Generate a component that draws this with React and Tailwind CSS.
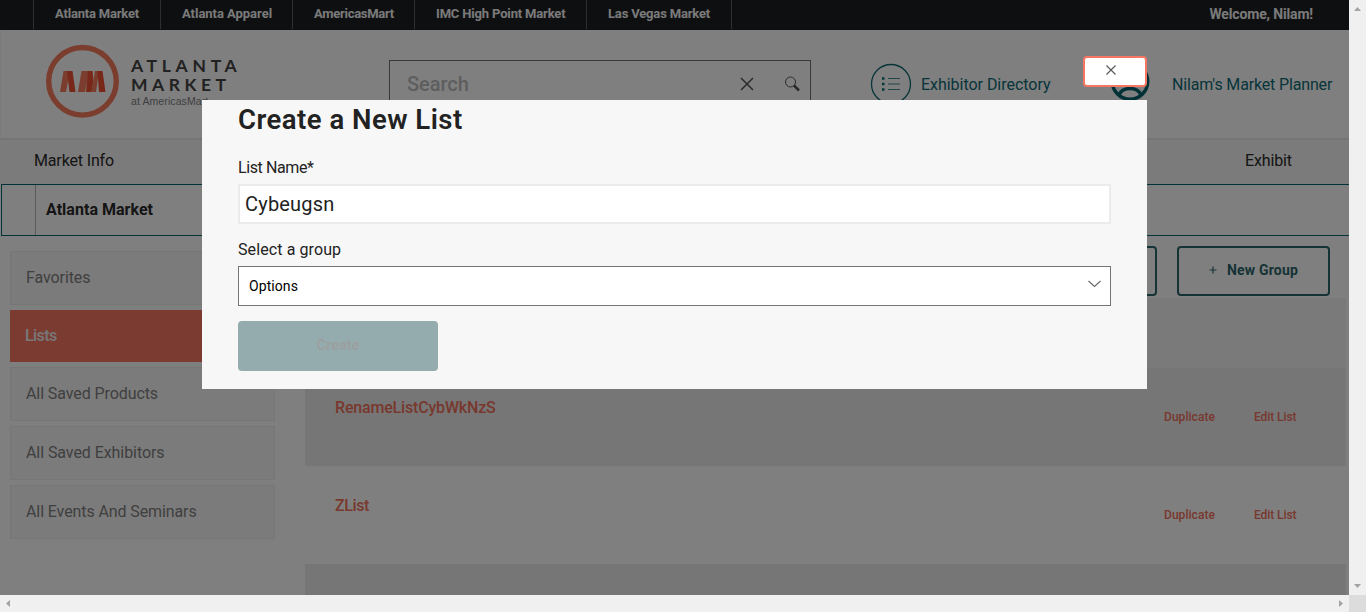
const markets = [
  { name: "Atlanta Market", cls: "w-[127px] tracking-[-0.19px]" },
  { name: "Atlanta Apparel", cls: "w-[132px] tracking-[-0.03px]" },
  { name: "AmericasMart", cls: "w-[122px] tracking-[-0.27px]" },
  { name: "IMC High Point Market", cls: "w-[172px] tracking-[-0.16px]" },
  { name: "Las Vegas Market", cls: "w-[145px] tracking-[-0.17px]" },
];

const sections = [
  { name: "Favorites", cls: "tracking-[-0.09px]" },
  { name: "Lists", active: true, cls: "tracking-[-0.6px]" },
  { name: "All Saved Products", cls: "tracking-[-0.09px]" },
  { name: "All Saved Exhibitors", cls: "tracking-[-0.07px]" },
  { name: "All Events And Seminars", cls: "tracking-[-0.1px]" },
];

function TopBar() {
  return (
    <div className="flex h-[30px] shrink-0 bg-[#1b1e22] pl-[33px] text-[13px] font-bold text-[#f4f4f4]">
      {markets.map((m) => (
        <div key={m.name} className={`h-[29px] border-l border-[#5c5f62] pl-[21px] leading-[27px] whitespace-nowrap ${m.cls}`}>
          {m.name}
        </div>
      ))}
      <div className="h-[29px] border-l border-[#5c5f62]" />
      <div className="ml-auto pr-[36px] text-sm leading-[28px] tracking-[-0.15px]">Welcome, Nilam!</div>
    </div>
  );
}

function Logo() {
  return (
    <div className="flex w-[343px] shrink-0 pt-[14px]">
      <svg width="74" height="74" viewBox="0 0 74 74" className="shrink-0">
        <circle cx="36.500" cy="37.300" r="33.800" fill="none" stroke="#f67a5c" strokeWidth="5.400" />
        <path d="M17.500 27H24l-4 21H14z" fill="#f67a5c" />
        <path d="M21 27h5.500l3 21h-6z" fill="#ee5130" />
        <path d="M35.500 27H43l-4 21h-7z" fill="#f67a5c" />
        <path d="M42 27h4.500l1 10-2 11h-5.500z" fill="#ee5130" />
        <path d="M49 27h4l-3 21h-4.500z" fill="#f67a5c" />
        <path d="M51.500 27h5l3 21H53z" fill="#ee5130" />
      </svg>
      <div className="pt-[12px] pl-[11px] font-['Lato',sans-serif] text-[17.5px] font-bold leading-[19px] whitespace-nowrap text-[#444]">
        <div className="tracking-[4.7px]">ATLANTA</div>
        <div className="tracking-[4.5px]">MARKET</div>
        <div className="-mt-px font-['Liberation_Sans',sans-serif] text-[10.5px] font-normal leading-[16px] tracking-[0.1px] text-[#808080]">at AmericasMart</div>
      </div>
    </div>
  );
}

function Header() {
  return (
    <header className="flex h-[108px] shrink-0 border-l border-[#f4f4f4] pl-[45px] text-base text-[#0e6a74]">
      <Logo />
      <div className="mt-[30px] flex h-[48px] w-[422px] shrink-0 items-center border border-[#707070] pl-[17px]">
        <span className="w-[333px] text-[20px] font-medium tracking-[-0.05px] text-[#bcbcbc]">Search</span>
        <svg width="14" height="14" viewBox="0 0 14 14" stroke="#555" strokeWidth="1.500">
          <path d="M1 1l12 12M13 1L1 13" />
        </svg>
        <svg width="16" height="16" viewBox="0 0 16 16" className="ml-[30px]" fill="none" stroke="#555">
          <circle cx="6.500" cy="6" r="5" />
          <path d="M10 9.500l5 5" strokeWidth="2.500" />
        </svg>
      </div>
      <svg width="42" height="42" viewBox="0 0 42 42" className="mt-[33px] ml-[59px] shrink-0" fill="none" stroke="#0e6a74">
        <circle cx="21" cy="21" r="19.500" strokeWidth="1.300" />
        <path d="M18 15.500h12M18 21h12M18 26.500h12" strokeWidth="0.800" />
        <path d="M12 15.500h2.500M12 21h2.500M12 26.500h2.500" strokeWidth="2.400" />
      </svg>
      <div className="ml-[9px] w-[189px] leading-[109px] tracking-[-0.03px] whitespace-nowrap">Exhibitor Directory</div>
      <svg width="40" height="40" viewBox="0 0 40 40" className="mt-[32px] shrink-0" fill="none" stroke="#00626c" strokeWidth="3.500">
        <circle cx="20" cy="19.500" r="17.700" />
        <circle cx="20" cy="14" r="6" />
        <path d="M9 33c2-5 6-6.500 11-6.500S29 28 31 33" />
      </svg>
      <div className="ml-[22px] leading-[109px] tracking-[-0.15px] whitespace-nowrap">Nilam's Market Planner</div>
    </header>
  );
}

function ListRow({ name, nameClass, shaded }) {
  return (
    <div className={`flex h-[98px] shrink-0 pl-[30px] text-[#f0705c] ${shaded ? "bg-[#ececec]" : ""}`}>
      <div className={`w-[829px] font-medium leading-[80px] ${nameClass}`}>{name}</div>
      <div className="w-[90px] text-[12px] font-medium leading-[98px] tracking-[0.05px]">Duplicate</div>
      <div className="text-[12px] font-medium leading-[98px] tracking-[-0.08px]">Edit List</div>
    </div>
  );
}

function Planner() {
  return (
    <main className="flex min-h-0 flex-1 overflow-hidden">
      <nav className="flex w-[275px] shrink-0 flex-col gap-[5px] pt-[15px] pl-[10px] text-base whitespace-nowrap">
        {sections.map((s) =>
          s.active ? (
            <div key={s.name} className={`h-[52px] bg-[#f67662] pl-[15px] font-medium leading-[52px] text-[#f0f0f0] ${s.cls}`}>{s.name}</div>
          ) : (
            <div key={s.name} className={`h-[54px] border border-[#ececec] bg-[#f6f6f6] pl-[15px] leading-[52px] text-[#808080] ${s.cls}`}>{s.name}</div>
          )
        )}
      </nav>
      <div className="ml-[30px] flex w-[1041px] shrink-0 flex-col">
        <div className="flex h-[62px] shrink-0 justify-end gap-[20px] pt-[10px] pr-[16px] text-sm font-bold text-[#2b666a]">
          <div className="h-[50px] w-[153px] rounded border-2 border-[#2b666a]" />
          <div className="flex h-[50px] w-[153px] items-center rounded border-2 border-[#2b666a] pb-[2px] pl-[30px] tracking-[0.2px] whitespace-nowrap">
            <svg width="8" height="8" viewBox="0 0 8 8" className="mr-[10px]" stroke="#2b666a" strokeWidth="1.200">
              <path d="M0.500 4h7M4 0.500v7" />
            </svg>
            New Group
          </div>
        </div>
        <div className="h-[70px] shrink-0 bg-[#f4f4f4]" />
        <ListRow name="RenameListCybWkNzS" nameClass="tracking-[-0.18px]" shaded />
        <ListRow name="ZList" nameClass="tracking-[-0.39px]" />
        <div className="h-[98px] shrink-0 bg-[#ececec]" />
      </div>
    </main>
  );
}

function Dialog() {
  return (
    <>
      <section className="absolute top-[100px] left-[202px] flex h-[289px] w-[945px] flex-col bg-[#f7f7f7] px-[36px] text-base text-[#222]">
        <h2 className="mt-[4px] h-[32px] text-[27.5px] font-semibold leading-[32px] tracking-[0.48px]">Create a New List</h2>
        <label className="mt-[20px] h-[24px] leading-[24px] tracking-[-0.4px]">List Name*</label>
        <div className="mt-[4px] h-[40px] border-2 border-[#ebebeb] bg-white pl-[5px] text-[20px] leading-[37px] tracking-[0.2px]">Cybeugsn</div>
        <label className="mt-[14px] h-[24px] leading-[24px] tracking-[0.1px]">Select a group</label>
        <div className="mt-[4px] flex h-[40px] items-center justify-between border border-[#757575] bg-white pr-[9px] pl-[10px] text-sm tracking-[0.08px] text-black">
          Options
          <svg width="13" height="8" viewBox="0 0 13 8" className="-mt-[4px]" fill="none" stroke="#666" strokeWidth="1.100">
            <path d="M0.500 1l6 5.500 6-5.500" />
          </svg>
        </div>
        <button className="mt-[15px] h-[50px] w-[200px] rounded bg-[#94acad] pb-[2px] text-sm font-bold tracking-[0.25px] text-[#9c9fa0]">Create</button>
      </section>
      <button className="absolute top-[56px] left-[1083px] flex h-[31px] w-[64px] items-center rounded border-2 border-[#f67662] bg-white pl-[21px]">
        <svg width="10" height="10" viewBox="0 0 10 10" className="-mt-[3px]" stroke="#555" strokeWidth="1.100">
          <path d="M0.500 0.500l9 9M9.500 0.500l-9 9" />
        </svg>
      </button>
    </>
  );
}

export default function App() {
  return (
    <div className="grid h-[612px] w-[1366px] grid-cols-[1349px_17px] grid-rows-[595px_17px] overflow-hidden font-['Roboto',sans-serif]">
      <div className="relative flex h-[595px] flex-col overflow-hidden bg-white">
        <TopBar />
        <Header />
        <div className="flex h-[46px] shrink-0 justify-between border-t-2 border-[#ebebeb] bg-[#f6f6f6] pr-[57px] pl-[34px] text-base leading-[42px] text-[#2a2a2a]">
          <span className="tracking-[-0.15px]">Market Info</span>
          <span className="tracking-[-0.12px]">Exhibit</span>
        </div>
        <div className="ml-px flex h-[52px] shrink-0 border-y border-l border-[#006474]">
          <div className="w-[34px] border-r border-[#b4b4b4]" />
          <div className="pl-[10px] text-base font-bold leading-[50px] tracking-[0.03px] text-[#2a2a2a]">Atlanta Market</div>
        </div>
        <Planner />
        <div className="absolute inset-0 bg-black/50" />
        <Dialog />
      </div>
      <div className="flex flex-col items-center justify-between bg-[#f0f0f0] py-[7px]">
        <svg width="7" height="4" viewBox="0 0 7 4" fill="#a3a3a3"><path d="M0 4L3.500 0 7 4z" /></svg>
        <svg width="7" height="4" viewBox="0 0 7 4" fill="#a3a3a3"><path d="M0 0h7L3.500 4z" /></svg>
      </div>
      <div className="flex items-center justify-between bg-[#f0f0f0] px-[6px]">
        <svg width="4" height="7" viewBox="0 0 4 7" fill="#a3a3a3"><path d="M4 0v7L0 3.500z" /></svg>
        <svg width="4" height="7" viewBox="0 0 4 7" fill="#a3a3a3"><path d="M0 0l4 3.500L0 7z" /></svg>
      </div>
      <div className="bg-[#dcdcdc]" />
    </div>
  );
}
